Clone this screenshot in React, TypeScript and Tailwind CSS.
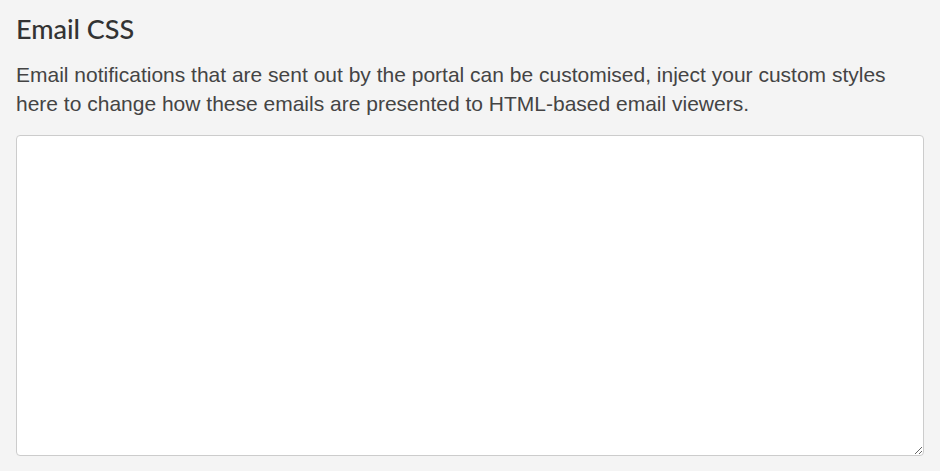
export default function App() {
  return (
    <div className="min-h-[471px] w-full bg-[#f4f4f4] px-4 pt-[12px]">
      <h2 className="font-['Lato',sans-serif] text-[27px] leading-[34px] font-medium text-[#333]">Email CSS</h2>
      <p className="mt-[14px] font-['Liberation_Sans',Arial,sans-serif] text-[21px] leading-[29px] text-[#444]">
        Email notifications that are sent out by the portal can be customised, inject your custom styles here to change
        how these emails are presented to HTML-based email viewers.
      </p>
      <textarea className="mt-[17px] block h-[321px] w-[908px] resize-y rounded-[4px] border border-[#ccc] bg-white p-2 font-['Liberation_Sans',Arial,sans-serif] text-[16px] outline-none" />
    </div>
  )
}
